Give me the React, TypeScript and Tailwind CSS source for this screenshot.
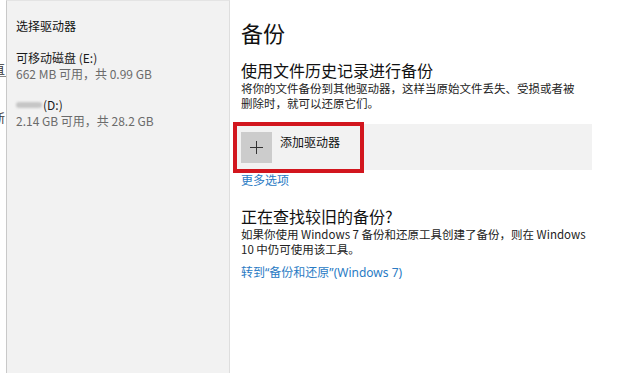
const font = "font-['Noto_Sans_CJK_SC','Noto_Sans',sans-serif]";
const latin = "font-['Noto_Sans',sans-serif]";

const PlusIcon = () => (
  <svg width="13" height="13" viewBox="0 0 13 13" fill="none">
    <path d="M6.5 0v13M0 6.5h13" stroke="#333" strokeWidth="1" />
  </svg>
);

const Drive = ({ label, free }: { label: React.ReactNode; free: string }) => (
  <div className="text-[12px] leading-[16px]">
    <div className="text-[#1a1a1a]">{label}</div>
    <div className="text-[#6b6b6b]">{free}</div>
  </div>
);

export default function App() {
  return (
    <div className={`flex h-[373px] w-[640px] overflow-hidden bg-white ${font}`}>
      {/* cut-off window behind the flyout */}
      <div className="relative w-[6px] shrink-0 overflow-hidden text-[12px] text-[#333]">
        <div className="relative -left-[7px] top-[62px] w-[14px] border-b border-[#888] leading-[14px]">直</div>
        <div className="relative -left-[7px] top-[96px] leading-[14px]">新</div>
      </div>

      <aside className="w-[224px] shrink-0 border-x border-t border-l-[#c9c9c9] border-r-[#dedede] border-t-[#e4e4e4] bg-[#f2f2f2] pl-[9px] pt-[17px]">
        <div className="text-[12px] leading-[16px] text-[#111]">选择驱动器</div>
        <div className="mt-[16px] flex flex-col gap-[15px]">
          <Drive label="可移动磁盘 (E:)" free="662 MB 可用，共 0.99 GB" />
          <Drive
            label={
              <span className="flex items-center">
                <span className="mr-[1px] inline-block h-[6px] w-[26px] rounded-sm bg-[#c6c6c6] blur-[1px]" />
                (D:)
              </span>
            }
            free="2.14 GB 可用，共 28.2 GB"
          />
        </div>
      </aside>

      <main className="flex-1 pl-[11px] pt-[17px] text-[#111]">
        <h1 className="text-[22px] leading-[30px] font-normal">备份</h1>

        <h2 className="mt-[13px] text-[16px] leading-[20px]">使用文件历史记录进行备份</h2>
        <p className="mt-[1px] text-[11.5px] leading-[15px] text-[#222]">
          将你的文件备份到其他驱动器，这样当原始文件丢失、受损或者被
          <br />
          删除时，就可以还原它们。
        </p>

        <div className="relative -ml-[4px] mt-[13px] flex h-[46px] w-[355px] bg-[#f2f2f2] pl-[4px] pt-[8px]">
          <div className="flex h-[31px] w-[31px] items-center justify-center bg-[#cccccc]">
            <PlusIcon />
          </div>
          <span className="ml-[8px] mt-[2px] text-[12px] leading-[16px] text-[#111]">添加驱动器</span>
          <div className="absolute -left-[4px] -top-[2px] h-[51px] w-[131px] border-[4px] border-[#d2161e]" />
        </div>

        <a className="mt-[2px] block text-[12px] leading-[16px] text-[#2a7bc4]">更多选项</a>

        <h2 className="mt-[18px] text-[16px] leading-[20px]">正在查找较旧的备份?</h2>
        <p className="mt-[1px] text-[11.5px] leading-[15px] text-[#222]">
          如果你使用 Windows 7 备份和还原工具创建了备份，则在 Windows
          <br />
          10 中仍可使用该工具。
        </p>
        <a className="mt-[7px] block text-[12px] leading-[16px] text-[#2a7bc4]">
          转到<span className={latin}>“</span>备份和还原<span className={latin}>”</span>
          <span className={latin}>(Windows 7)</span>
        </a>
      </main>
    </div>
  );
}
